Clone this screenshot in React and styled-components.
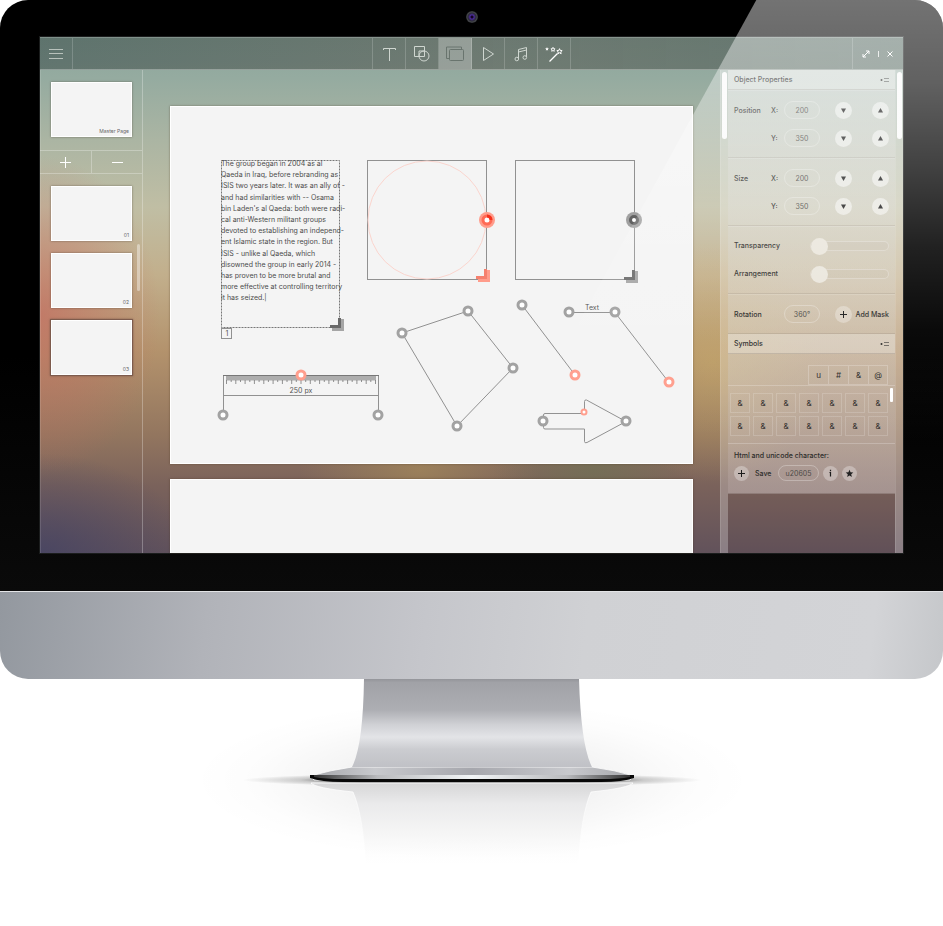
import React from "react";
import styled, { createGlobalStyle, css } from "styled-components";

const GlobalStyle = createGlobalStyle`
  *, *::before, *::after { box-sizing: border-box; }
  body {
    margin: 0;
    background: #fff;
    font-family: Inter, "Open Sans", sans-serif;
    font-size: 7px;
    color: #484846;
  }
  button, input, textarea {
    font: inherit;
    color: inherit;
    border: 0;
    margin: 0;
    padding: 0;
    background: none;
  }
  svg { display: block; }
`;

/* ---------- monitor ---------- */

const Stage = styled.main`
  display: flex;
  flex-direction: column;
  overflow: hidden;
`;

const Bezel = styled.section`
  position: relative;
  display: grid;
  grid-template-rows: 37px auto 38px;
  padding: 0 40px;
  background: linear-gradient(#000, #000 60%, #0a0a0a);
  border-radius: 28px 28px 0 0;
`;

const Camera = styled.i`
  place-self: center;
  width: 12px;
  height: 12px;
  margin-top: -4px;
  border-radius: 50%;
  background: radial-gradient(circle, #14041f 0 1px, #4a2a9c 2px, #2a2a33 4px, #45474b 5px, #2b2c2f 6px);
`;

const Glare = styled.div`
  position: absolute;
  inset: 0;
  pointer-events: none;
  border-radius: 0 28px 0 0;
  clip-path: polygon(80.2% 0, 100% 0, 100% 100%, 45.7% 100%);
  background: linear-gradient(
    rgba(255, 255, 255, 0.45),
    rgba(255, 255, 255, 0.38) 14%,
    rgba(255, 255, 255, 0.26) 28%,
    rgba(255, 255, 255, 0.13) 42%,
    rgba(255, 255, 255, 0.04) 56%,
    rgba(255, 255, 255, 0) 75%
  );
`;

const Chin = styled.div`
  height: 88px;
  border-top: 1px solid #e3e4e6;
  border-radius: 0 0 28px 28px;
  background: linear-gradient(97deg, #93989f, #b1b3b9 22%, #c5c6cb 45%, #d0d1d4 62%, #d3d4d7 92%, #c5c7ca);
`;

const Screen = styled.div`
  display: grid;
  grid-template-rows: 33px auto;
  box-shadow: 0 0 0 1px #1b1d1d;
  background:
    radial-gradient(ellipse 120px 160px at 0 54%, rgba(196, 108, 96, 0.72), rgba(196, 108, 96, 0)),
    radial-gradient(ellipse 150px 100px at 0 100%, rgba(66, 66, 100, 0.75), rgba(66, 66, 100, 0)),
    radial-gradient(ellipse 110px 120px at 78% 63%, rgba(198, 168, 100, 0.55), rgba(198, 168, 100, 0)),
    radial-gradient(ellipse 100px 60px at 64% 84%, rgba(108, 114, 82, 0.6), rgba(108, 114, 82, 0)),
    radial-gradient(ellipse 120px 60px at 44% 84%, rgba(172, 144, 90, 0.6), rgba(172, 144, 90, 0)),
    linear-gradient(#8ca69c, #95aba0 8%, #abb5a3 20%, #c0bea4 33%, #c2af8c 46%, #b3926c 61%, #93765f 77%, #7a625b 87%, #62525b);
`;

/* ---------- toolbar ---------- */

const Toolbar = styled.header`
  display: grid;
  grid-template-columns: 1fr auto 1fr;
  border-top: 1px solid rgba(255, 255, 255, 0.2);
  border-bottom: 1px solid rgba(255, 255, 255, 0.3);
  background: linear-gradient(90deg, rgba(40, 56, 54, 0.46), rgba(70, 68, 62, 0.46) 50%, rgba(46, 56, 52, 0.42));
`;

const ToolGroup = styled.nav`
  display: flex;
  border-left: 1px solid rgba(255, 255, 255, 0.18);
`;

const ToolButton = styled.button`
  display: grid;
  place-items: center;
  width: 33px;
  color: #cfd6d0;
  border-right: 1px solid rgba(255, 255, 255, 0.18);
  ${({ $active }) => $active && css`
    background: rgba(255, 255, 255, 0.28);
    color: #69746e;
  `}
`;

const WindowButtons = styled.div`
  justify-self: end;
  display: flex;
  align-items: center;
  justify-content: space-between;
  width: 51px;
  padding: 0 9px 0 8px;
  color: #fff;
  border-left: 1px solid rgba(255, 255, 255, 0.2);
`;

const WindowButton = styled.button`
  display: grid;
  place-items: center;
  width: 9px;
  height: 9px;
`;

/* ---------- body ---------- */

const Workspace = styled.div`
  display: grid;
  grid-template-columns: 103px minmax(0, 1fr) 8px 167px 8px;
`;

const Sidebar = styled.aside`
  border-right: 1px solid rgba(255, 255, 255, 0.28);
  box-shadow: inset 1px 0 rgba(255, 255, 255, 0.12);
`;

const MasterArea = styled.div`
  padding: 12px 11px 13px;
`;

const Thumb = styled.button`
  display: flex;
  align-items: flex-end;
  justify-content: flex-end;
  width: 81px;
  height: 55px;
  padding: 0 2px 1px;
  font-size: 5px;
  line-height: 7px;
  color: #666;
  background: #f4f4f4;
  border: 1px solid #fff;
  box-shadow: ${({ $selected }) =>
    $selected ? "0 0 0 1px #7d5b4d, 0 0 2px 1px #7d5b4d" : "0 0 2px rgba(70, 60, 50, 0.6)"};
`;

const PageActions = styled.div`
  display: grid;
  grid-template-columns: 1fr 1fr;
  height: 24px;
  border: solid rgba(255, 255, 255, 0.28);
  border-width: 1px 0;
`;

const PageAction = styled.button`
  display: grid;
  place-items: center;
  color: #fff;
  & + & { border-left: 1px solid rgba(255, 255, 255, 0.28); }
`;

const PageList = styled.div`
  position: relative;
  display: flex;
  flex-direction: column;
  gap: 12px;
  padding: 12px 11px;
`;

const ListThumb = styled.i`
  position: absolute;
  top: 70px;
  right: 2px;
  width: 3px;
  height: 47px;
  border-radius: 2px;
  background: rgba(255, 255, 255, 0.4);
`;

const Canvas = styled.section`
  display: flex;
  flex-direction: column;
  gap: 15px;
  padding: 36px 27px 0;
`;

const Page = styled.article`
  position: relative;
  overflow: hidden;
  height: ${({ $partial }) => ($partial ? "74px" : "358px")};
  background: #f4f4f4;
  border: solid #fff;
  border-width: ${({ $partial }) => ($partial ? "1px 1px 0" : "1px")};
  box-shadow: 0 0 2px rgba(70, 50, 30, 0.5);
`;

const Drawing = styled.svg`
  position: absolute;
  top: -1px;
  left: -1px;
`;

const TextFrame = styled.textarea`
  position: absolute;
  top: 51px;
  left: 50px;
  width: 126px;
  height: 168px;
  resize: none;
  overflow: hidden;
  white-space: pre;
  outline: none;
  font-size: 7px;
  line-height: 1.6;
  color: #4c4c4c;
`;

const CanvasLabel = styled.span`
  position: absolute;
  left: ${({ $x }) => $x}px;
  top: ${({ $y }) => $y}px;
  transform: translate(-50%, -50%);
  line-height: 8px;
  white-space: nowrap;
  color: #555;
`;

const ScrollRail = styled.div`
  padding: 2px 1px;
  background: rgba(255, 255, 255, 0.26);
  border-left: 1px solid rgba(255, 255, 255, 0.12);
`;

const RailThumb = styled.i`
  display: block;
  width: 5px;
  height: 67px;
  border-radius: 3px;
  background: #fafafa;
`;

/* ---------- properties panel ---------- */

const PanelColumn = styled.aside`
  background: rgba(90, 66, 66, 0.08);
`;

const Panel = styled.form`
  color: #2c2c2a;
  background: linear-gradient(rgba(240, 244, 242, 0.52), rgba(236, 234, 226, 0.5) 60%, rgba(226, 216, 216, 0.44));
  box-shadow: 0 1px rgba(255, 255, 255, 0.2);
`;

const PanelHeader = styled.h2`
  display: flex;
  align-items: center;
  justify-content: space-between;
  height: 20px;
  margin: 0;
  padding: 0 6px;
  font-size: 7px;
  font-weight: 500;
  background: rgba(255, 255, 255, 0.26);
  border: solid rgba(90, 80, 70, 0.2);
  border-width: 0 0 1px;
`;

const Section = styled.div`
  display: grid;
  row-gap: 11px;
  padding: 10px 6px 11px;
  border-top: 1px solid rgba(255, 255, 255, 0.14);
  border-bottom: 1px solid rgba(90, 80, 70, 0.14);
`;

const FieldRow = styled.div`
  display: grid;
  grid-template-columns: 37px 13px 36px 1fr 17px 20px 17px;
  align-items: center;
  height: 17px;
  font-weight: 500;
`;

const RotationRow = styled(FieldRow)`
  grid-template-columns: 50px 36px 1fr 17px 37px;
`;

const SliderRow = styled(FieldRow)`
  grid-template-columns: 1fr 79px;
`;

const AddMask = styled.label`
  justify-self: end;
  white-space: nowrap;
`;

const Field = styled.input`
  width: ${({ $wide }) => ($wide ? "41px" : "36px")};
  height: ${({ $wide }) => ($wide ? "16px" : "18px")};
  border: 1px solid rgba(255, 255, 255, 0.28);
  border-radius: 9px;
  text-align: center;
  font-weight: 400;
  color: #4c4a46;
`;

const RoundButton = styled.button`
  display: grid;
  place-items: center;
  width: ${({ $small }) => ($small ? 15 : 17)}px;
  height: ${({ $small }) => ($small ? 15 : 17)}px;
  border-radius: 50%;
  color: #1c1c1c;
  background: rgba(255, 255, 255, ${({ $soft }) => ($soft ? 0.3 : 0.5)});
`;

const Up = styled(RoundButton)`
  grid-column: 7;
`;
const Down = styled(RoundButton)`
  grid-column: 5;
`;
const Axis = styled.label`
  grid-column: 2;
`;

const Slider = styled.input`
  appearance: none;
  width: 79px;
  height: 17px;
  &::-webkit-slider-runnable-track {
    height: 10px;
    border: 1px solid rgba(255, 255, 255, 0.28);
    border-radius: 5px;
    background: rgba(120, 110, 90, 0.04);
  }
  &::-webkit-slider-thumb {
    appearance: none;
    width: 17px;
    height: 17px;
    margin-top: -4px;
    border-radius: 50%;
    background: #eae6dc;
  }
`;

const SymbolTabs = styled.div`
  display: flex;
  justify-content: flex-end;
  padding: 11px 7px 0;
`;

const SymbolTab = styled.button`
  width: 20px;
  height: 20px;
  font-size: 8px;
  border: 1px solid rgba(255, 255, 255, 0.22);
  border-right-width: 0;
  &:last-child { border-right-width: 1px; }
`;

const SymbolGrid = styled.div`
  position: relative;
  display: grid;
  grid-template-columns: repeat(7, 20px);
  gap: 3px;
  padding: 7px 2px;
  border: solid rgba(255, 255, 255, 0.22);
  border-width: 1px 0;
`;

const SymbolCell = styled.button`
  height: 20px;
  font-size: 8px;
  border: 1px solid rgba(255, 255, 255, 0.17);
`;

const GridThumb = styled.i`
  position: absolute;
  top: 2px;
  right: 2px;
  width: 3px;
  height: 14px;
  border-radius: 1px;
  background: #fff;
`;

const CodeArea = styled.div`
  padding: 7px 6px 12px;
  font-weight: 500;
`;

const CodeLabel = styled.label`
  display: block;
  line-height: 9px;
  margin-bottom: 5px;
`;

const CodeRow = styled.div`
  display: flex;
  align-items: center;
  gap: 4px;
`;

const SaveLabel = styled.span`
  width: 21px;
  padding-left: 2px;
`;

/* ---------- icons ---------- */

const Icon = ({ w = 18, h = 18, children, ...rest }) => (
  <svg width={w} height={h} viewBox={`0 0 ${w} ${h}`} fill="none" stroke="currentColor" aria-hidden="true" {...rest}>
    {children}
  </svg>
);

const MenuIcon = () => (
  <Icon w={14} h={12} opacity=".8"><path d="M0 1.500h14M0 5.500h14M0 10.500h14" /></Icon>
);
const TextIcon = () => (
  <Icon><path d="M3.500 5V3.500h12V5M9.500 3.500V16" /></Icon>
);
const ShapesIcon = () => (
  <Icon><path d="M6 11.500H1.500v-10h10V6" /><path d="M6 11.500V6h5.500v5.500z" /><circle cx="11" cy="11" r="5" /></Icon>
);
const FramesIcon = () => (
  <Icon w={20}><path d="M4.500 13.500H1.500V2h15v2.500" /><rect x="4.500" y="4.500" width="14" height="11" rx="1" /></Icon>
);
const PlayIcon = () => (
  <Icon><path d="M4.500 2.500v13L14.500 9z" strokeLinejoin="round" /></Icon>
);
const MusicIcon = () => (
  <Icon>
    <path d="M6.500 14V4.500l8-2V12M6.500 7l8-2" />
    <circle cx="4.800" cy="14" r="1.800" /><circle cx="12.800" cy="12.500" r="1.800" />
  </Icon>
);
const Star = ({ x, y, r, ...rest }) => {
  const pts = Array.from({ length: 10 }, (_, i) => {
    const a = (Math.PI * i) / 5 - Math.PI / 2;
    const q = i % 2 ? r * 0.45 : r;
    return `${(x + q * Math.cos(a)).toFixed(2)},${(y + q * Math.sin(a)).toFixed(2)}`;
  });
  return <polygon points={pts.join(" ")} {...rest} />;
};
const WandIcon = () => (
  <Icon w={20} stroke="#fff">
    <path d="M5.500 16.500l8-8" strokeWidth="1.200" />
    <Star x={3} y={4} r={2} fill="#fff" stroke="none" />
    <Star x={9} y={4.500} r={2.200} strokeWidth=".9" />
    <Star x={15.500} y={6.500} r={2.800} strokeWidth="1" />
  </Icon>
);
const ExpandIcon = () => (
  <Icon w={8} h={8}><path d="M1 7l6-6M4 1h3v3M1 4v3h3" /></Icon>
);
const BarIcon = () => <Icon w={8} h={8}><path d="M4.500 1v6" opacity=".8" /></Icon>;
const CloseIcon = () => <Icon w={8} h={8}><path d="M1.500 1.500l5 5M6.500 1.500l-5 5" /></Icon>;
const PlusIcon = ({ size = 11 }) => (
  <Icon w={size} h={size}><path d={`M0 ${size / 2}h${size}M${size / 2} 0v${size}`} /></Icon>
);
const MinusIcon = () => <Icon w={11} h={11}><path d="M0 5.500h11" /></Icon>;
const CollapseIcon = () => (
  <Icon w={9} h={6} strokeWidth=".6">
    <circle cx="1.500" cy="3" r="1" fill="currentColor" stroke="none" /><path d="M4 1.500h5M4 4.500h5" />
  </Icon>
);
const Caret = ({ up }) => (
  <Icon w={5} h={5} fill="currentColor" stroke="none"><path d={up ? "M0 4.500L2.500 0 5 4.500z" : "M0 .5h5L2.500 5z"} /></Icon>
);
const StarIcon = () => (
  <Icon w={9} h={9} stroke="none"><Star x={4.500} y={4.800} r={4} fill="#222" /></Icon>
);
const InfoIcon = () => (
  <Icon w={5} h={8} strokeWidth="1.200"><path d="M1.500 3.500h1V7.500M2.500 .8v1.400" /></Icon>
);

/* ---------- canvas drawing ---------- */

const Node = ({ x, y, red, r = 4 }) => (
  <circle cx={x} cy={y} r={r} fill="#fff" stroke={red ? "#ff9e8d" : "#a2a2a2"} strokeWidth={r > 3 ? 3 : 2} />
);

const Corner = ({ x, y, outer, inner }) => (
  <g stroke="none">
    <path d={`M${x - 8} ${y + 4}h12v-12h-4v8h-8z`} fill={outer} />
    <path d={`M${x - 10} ${y + 1}h11v-10h-3v7h-8z`} fill={inner} />
  </g>
);

const ticks = Array.from({ length: 33 }, (_, i) => {
  const x = 226.500 + (i * 149) / 32;
  return `M${x.toFixed(1)} 380v${i % 2 ? 2 : 4}`;
}).join("");

const Shapes = () => (
  <Drawing width="523" height="358" viewBox="170 106 523 358" fill="none" stroke="#919191" aria-hidden="true">
    <rect x="221.500" y="160.500" width="118" height="167" stroke="#777" strokeDasharray="2 1" />
    <rect x="221.500" y="328.500" width="10" height="10" />
    <Corner x={340} y={327} outer="#a5a5a5" inner="#6a6a6a" />

    <rect x="367.500" y="160.500" width="119" height="119" />
    <circle cx="427" cy="220" r="59" stroke="#fbd5ce" />
    <circle cx="487" cy="220" r="8" fill="#ff9c8b" stroke="none" />
    <circle cx="487" cy="220" r="4" fill="#fff" stroke="#ff6a55" strokeWidth="3" />
    <path d="M487 216a4 4 0 0 1 4 4" stroke="#f5301c" strokeWidth="3" />
    <Corner x={486} y={278} outer="#ff9c8b" inner="#f5806e" />

    <rect x="515.500" y="160.500" width="119" height="119" />
    <circle cx="634" cy="220" r="8" fill="#a0a0a0" stroke="none" />
    <circle cx="634" cy="220" r="3.500" fill="#fff" stroke="#626262" strokeWidth="3" />
    <Corner x={634} y={279} outer="#a5a5a5" inner="#6a6a6a" />

    <path d="M223.500 415v-40M378.500 415v-40M223.500 395.500h155" />
    <path d="M226 378h150" stroke="#adadad" strokeWidth="5" />
    <path d="M223 375.500h156" stroke="#777" />
    <path d={ticks} stroke="#777" strokeWidth=".8" />
    <Node x={301} y={375} red />
    <Node x={223} y={415} />
    <Node x={378} y={415} />

    <path d="M402 333l66-22 45 57-56 58z" />
    <Node x={402} y={333} />
    <Node x={468} y={311} />
    <Node x={513} y={368} />
    <Node x={457} y={426} />

    <path d="M522 305l53 70M569 312.500h46l54 70" />
    <Node x={522} y={305} />
    <Node x={575} y={375} red />
    <Node x={569} y={312} />
    <Node x={615} y={312} />
    <Node x={669} y={382} red />

    <path d="M543.500 415q0-1.500 1.500-1.500h39.500v-12q0-2 2-1.500L626 421.500 587 442.500q-2.500 1-2.500-1v-12.500H545q-1.500 0-1.500-1.500z" />
    <Node x={543} y={421} />
    <Node x={626} y={421} />
    <Node x={584} y={412} r={2.500} red />
  </Drawing>
);

const copy = `The group began in 2004 as al
Qaeda in Iraq, before rebranding as
ISIS two years later. It was an ally of -
and had similarities with -- Osama
bin Laden's al Qaeda: both were radi-
cal anti-Western militant groups
devoted to establishing an independ-
ent Islamic state in the region. But
ISIS - unlike al Qaeda, which
disowned the group in early 2014 -
has proven to be more brutal and
more effective at controlling territory
it has seized.|`;

/* ---------- stand ---------- */

const StandArea = styled.div`
  display: flex;
  justify-content: center;
`;

const Stand = () => (
  <StandArea>
    <svg width="570" height="247" viewBox="186 679 570 247" aria-hidden="true">
      <defs>
        <linearGradient id="neck" x1="0" y1="0" x2="0" y2="1">
          <stop offset="0" stopColor="#94959a" />
          <stop offset=".04" stopColor="#a1a2a7" />
          <stop offset=".35" stopColor="#adaeb3" />
          <stop offset=".52" stopColor="#d0d1d5" />
          <stop offset=".66" stopColor="#e3e4e7" />
          <stop offset=".8" stopColor="#cbccd0" />
          <stop offset="1" stopColor="#c0c1c6" />
        </linearGradient>
        <linearGradient id="foot">
          <stop offset="0" stopColor="#a5a6aa" />
          <stop offset=".2" stopColor="#c8c9cd" />
          <stop offset=".5" stopColor="#a6a7ad" />
          <stop offset=".8" stopColor="#c8c9cd" />
          <stop offset="1" stopColor="#a5a6aa" />
        </linearGradient>
        <linearGradient id="lip">
          <stop offset="0" stopColor="#333" />
          <stop offset=".2" stopColor="#b9babd" />
          <stop offset=".5" stopColor="#f2f5f7" />
          <stop offset=".8" stopColor="#b9babd" />
          <stop offset="1" stopColor="#333" />
        </linearGradient>
        <linearGradient id="mirror" x1="0" y1="0" x2="0" y2="1">
          <stop offset="0" stopColor="#d6d6d7" />
          <stop offset=".25" stopColor="#eaeaeb" />
          <stop offset=".6" stopColor="#f5f5f5" />
          <stop offset="1" stopColor="#fcfcfc" stopOpacity="0" />
        </linearGradient>
        <linearGradient id="mirrorEdge" x1="0" y1="0" x2="0" y2="1">
          <stop offset="0" stopColor="#fff" />
          <stop offset="1" stopColor="#fff" stopOpacity="0" />
        </linearGradient>
        <radialGradient id="haze">
          <stop offset="0" stopColor="#000" stopOpacity=".13" />
          <stop offset=".5" stopColor="#000" stopOpacity=".04" />
          <stop offset=".8" stopColor="#000" stopOpacity=".01" />
          <stop offset="1" stopColor="#000" stopOpacity="0" />
        </radialGradient>
        <radialGradient id="contact">
          <stop offset=".6" stopColor="#000" stopOpacity=".8" />
          <stop offset=".75" stopColor="#000" stopOpacity=".3" />
          <stop offset="1" stopColor="#000" stopOpacity="0" />
        </radialGradient>
      </defs>
      <ellipse cx="471" cy="780" rx="280" ry="80" fill="url(#haze)" />
      <ellipse cx="471" cy="780" rx="230" ry="7" fill="url(#contact)" opacity=".6" />
      <path d="M310 783H632Q628 788 590 792Q580 815 577 865H365Q362 815 352 792Q314 788 310 783z" fill="url(#mirror)" stroke="url(#mirrorEdge)" strokeWidth=".8" />
      <path d="M309 776Q330 770 351 767H591Q614 770 633 776L629 780H313z" fill="url(#foot)" stroke="#fff" strokeWidth=".8" />
      <path d="M363 679H578Q580 746 591 767H351Q362 746 363 679z" fill="url(#neck)" />
      <path d="M309 775H633V778Q622 782 600 782H342Q320 782 309 778z" fill="#080808" />
      <path d="M313 775H629V777Q618 779 600 779H342Q324 779 313 777z" fill="url(#lip)" />
    </svg>
  </StandArea>
);

/* ---------- application ---------- */

const tools = [
  ["Text", TextIcon],
  ["Shapes", ShapesIcon],
  ["Frames", FramesIcon],
  ["Video", PlayIcon],
  ["Audio", MusicIcon],
  ["Effects", WandIcon],
];

const Stepper = ({ group, axis, value }) => {
  const id = `${group}-${axis}`;
  return (
    <FieldRow>
      {axis === "X" && <span>{group}</span>}
      <Axis htmlFor={id}>{axis}:</Axis>
      <Field id={id} defaultValue={value} />
      <Down type="button" aria-label={`Decrease ${group} ${axis}`}><Caret /></Down>
      <Up type="button" aria-label={`Increase ${group} ${axis}`}><Caret up /></Up>
    </FieldRow>
  );
};

export default function App() {
  return (
    <>
      <GlobalStyle />
      <Stage>
        <Bezel>
          <Camera />
          <Screen>
            <Toolbar>
              <ToolButton aria-label="Menu"><MenuIcon /></ToolButton>
              <ToolGroup>
                {tools.map(([name, Glyph]) => (
                  <ToolButton key={name} aria-label={name} $active={name === "Frames"}><Glyph /></ToolButton>
                ))}
              </ToolGroup>
              <WindowButtons>
                <WindowButton aria-label="Expand"><ExpandIcon /></WindowButton>
                <WindowButton aria-label="Minimise"><BarIcon /></WindowButton>
                <WindowButton aria-label="Close"><CloseIcon /></WindowButton>
              </WindowButtons>
            </Toolbar>

            <Workspace>
              <Sidebar>
                <MasterArea><Thumb>Master Page</Thumb></MasterArea>
                <PageActions>
                  <PageAction aria-label="Add page"><PlusIcon /></PageAction>
                  <PageAction aria-label="Remove page"><MinusIcon /></PageAction>
                </PageActions>
                <PageList>
                  {["01", "02", "03"].map((n) => (
                    <Thumb key={n} $selected={n === "03"}>{n}</Thumb>
                  ))}
                  <ListThumb />
                </PageList>
              </Sidebar>

              <Canvas>
                <Page>
                  <Shapes />
                  <TextFrame aria-label="Text frame" defaultValue={copy} spellCheck={false} />
                  <CanvasLabel $x={56} $y={227}>1</CanvasLabel>
                  <CanvasLabel $x={130} $y={284}>250 px</CanvasLabel>
                  <CanvasLabel $x={421} $y={201}>Text</CanvasLabel>
                </Page>
                <Page $partial />
              </Canvas>

              <ScrollRail><RailThumb /></ScrollRail>

              <PanelColumn>
                <Panel>
                  <PanelHeader>Object Properties <CollapseIcon /></PanelHeader>
                  {["Position", "Size"].map((group) => (
                    <Section key={group}>
                      <Stepper group={group} axis="X" value="200" />
                      <Stepper group={group} axis="Y" value="350" />
                    </Section>
                  ))}
                  <Section>
                    {["Transparency", "Arrangement"].map((name) => (
                      <SliderRow key={name}>
                        <label htmlFor={name}>{name}</label>
                        <Slider id={name} type="range" defaultValue="0" />
                      </SliderRow>
                    ))}
                  </Section>
                  <Section>
                    <RotationRow>
                      <label htmlFor="rotation">Rotation</label>
                      <Field id="rotation" defaultValue="360°" />
                      <i />
                      <RoundButton type="button" id="mask" $soft><PlusIcon size={7} /></RoundButton>
                      <AddMask htmlFor="mask">Add Mask</AddMask>
                    </RotationRow>
                  </Section>
                  <PanelHeader>Symbols <CollapseIcon /></PanelHeader>
                  <SymbolTabs>
                    {["u", "#", "&", "@"].map((s) => <SymbolTab key={s} type="button">{s}</SymbolTab>)}
                  </SymbolTabs>
                  <SymbolGrid>
                    {Array.from({ length: 14 }, (_, i) => <SymbolCell key={i} type="button">&amp;</SymbolCell>)}
                    <GridThumb />
                  </SymbolGrid>
                  <CodeArea>
                    <CodeLabel htmlFor="code">Html and unicode character:</CodeLabel>
                    <CodeRow>
                      <RoundButton type="button" $small $soft aria-label="Save character"><PlusIcon size={7} /></RoundButton>
                      <SaveLabel>Save</SaveLabel>
                      <Field id="code" $wide defaultValue="u20605" />
                      <RoundButton type="button" $small $soft aria-label="Information"><InfoIcon /></RoundButton>
                      <RoundButton type="button" $small $soft aria-label="Favourite"><StarIcon /></RoundButton>
                    </CodeRow>
                  </CodeArea>
                </Panel>
              </PanelColumn>

              <ScrollRail><RailThumb /></ScrollRail>
            </Workspace>
          </Screen>
          <Glare />
        </Bezel>
        <Chin />
        <Stand />
      </Stage>
    </>
  );
}
